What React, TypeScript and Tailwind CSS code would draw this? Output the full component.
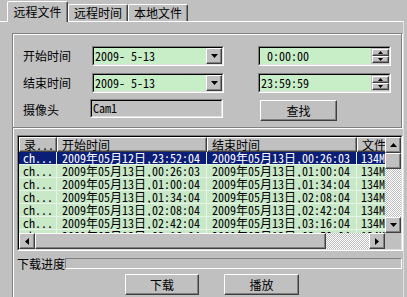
import React from "react";

const RAISED =
  "border border-t-white border-l-white border-r-[#404040] border-b-[#404040] shadow-[inset_-1px_-1px_0_#808080] bg-[#c0c0c0]";
const CHECKER =
  "bg-[image:repeating-conic-gradient(#ffffff_0%_25%,#c0c0c0_0%_50%)] bg-size-[2px_2px]";

function Tri({ dir, w = 7, h = 4 }: { dir: "up" | "down" | "left" | "right"; w?: number; h?: number }) {
  if (dir === "up")
    return (
      <svg width={w} height={h} viewBox={`0 0 ${w} ${h}`}>
        <polygon points={`0,${h} ${w},${h} ${w / 2},0`} fill="#000" />
      </svg>
    );
  if (dir === "down")
    return (
      <svg width={w} height={h} viewBox={`0 0 ${w} ${h}`}>
        <polygon points={`0,0 ${w},0 ${w / 2},${h}`} fill="#000" />
      </svg>
    );
  if (dir === "left")
    return (
      <svg width={h} height={w} viewBox={`0 0 ${h} ${w}`}>
        <polygon points={`${h},0 ${h},${w} 0,${w / 2}`} fill="#000" />
      </svg>
    );
  return (
    <svg width={h} height={w} viewBox={`0 0 ${h} ${w}`}>
      <polygon points={`0,0 0,${w} ${h},${w / 2}`} fill="#000" />
    </svg>
  );
}

function Combo({ value }: { value: string }) {
  return (
    <div className="w-[132px] h-[20px] border border-t-[#808080] border-l-[#808080] border-r-white border-b-white">
      <div className="h-full flex border border-t-[#000000] border-l-[#000000] border-r-[#dfdfdf] border-b-[#dfdfdf] bg-[#c8eec8]">
        <div className="flex-1 pl-[1px] flex items-center text-[12px] leading-none whitespace-pre">{value}</div>
        <div className={`w-[16px] h-full flex items-center justify-center ${RAISED}`}>
          <Tri dir="down" />
        </div>
      </div>
    </div>
  );
}

function TimeField({ value }: { value: string }) {
  return (
    <div className="w-[133px] h-[20px] border border-t-[#808080] border-l-[#808080] border-r-white border-b-white">
      <div className="h-full flex border border-t-[#000000] border-l-[#000000] border-r-[#dfdfdf] border-b-[#dfdfdf] bg-[#c0c0c0]">
        <div className="flex-1 pl-[1px] flex items-center text-[12px] leading-none whitespace-pre bg-[#c8eec8]">{value}</div>
        <div className="w-[18px] h-full flex flex-col justify-between py-[1px] pl-[1px]">
          <div className={`h-[7px] flex items-center justify-center ${RAISED}`}>
            <Tri dir="up" w={5} h={3} />
          </div>
          <div className={`h-[7px] flex items-center justify-center ${RAISED}`}>
            <Tri dir="down" w={5} h={3} />
          </div>
        </div>
      </div>
    </div>
  );
}

const rows: [string, string][] = [
  ["2009年05月12日,23:52:04", "2009年05月13日,00:26:03"],
  ["2009年05月13日,00:26:03", "2009年05月13日,01:00:04"],
  ["2009年05月13日,01:00:04", "2009年05月13日,01:34:04"],
  ["2009年05月13日,01:34:04", "2009年05月13日,02:08:04"],
  ["2009年05月13日,02:08:04", "2009年05月13日,02:42:04"],
  ["2009年05月13日,02:42:04", "2009年05月13日,03:16:04"],
  ["2009年05月13日,03:16:04", "2009年05月13日,03:50:04"],
];

function HeaderCell({ w, label }: { w: string; label: string }) {
  return (
    <div className={`${w} h-[15px] shrink-0 pl-[4px] flex items-center overflow-hidden whitespace-nowrap ${RAISED}`}>
      {label}
    </div>
  );
}

export default function App() {
  return (
    <div className="w-[407px] h-[297px] overflow-hidden bg-[#c0c0c0] text-black text-[12px] leading-none font-['Noto_Sans_Mono_CJK_SC','Noto_Sans_CJK_SC',sans-serif]">
      {/* Tabs */}
      <div className="flex items-end h-[21px] pl-[7px]">
        <div className="relative z-10 -mb-px h-[21px] w-[61px] flex items-center justify-center bg-[#c0c0c0] border-t border-l border-t-white border-l-white border-r border-r-[#404040] shadow-[inset_-1px_0_0_#808080] rounded-t-[2px]">
          远程文件
        </div>
        <div className="h-[17px] w-[60px] flex items-center justify-center border-t border-l border-t-white border-l-white border-r border-r-[#404040] shadow-[inset_-1px_0_0_#808080] rounded-t-[2px]">
          远程时间
        </div>
        <div className="h-[17px] w-[60px] flex items-center justify-center border-t border-l border-t-white border-l-white border-r border-r-[#404040] shadow-[inset_-1px_0_0_#808080] rounded-t-[2px]">
          本地文件
        </div>
      </div>

      {/* Panel */}
      <div className="border-t border-t-white w-[404px] h-[276px] border-r border-r-[#e0e0e0]">
        {/* Group box */}
        <div className="ml-[12px] mt-[11px] w-[390px] h-[95px] border border-[#808080] shadow-[inset_1px_1px_0_#ffffff,1px_1px_0_#ffffff] pt-[12px] pl-[10px]">
          <div className="flex h-[20px] items-center">
            <div className="w-[69px]">开始时间</div>
            <Combo value="2009- 5-13" />
            <div className="w-[34px]" />
            <TimeField value=" 0:00:00" />
          </div>
          <div className="flex h-[20px] items-center mt-[7px]">
            <div className="w-[69px]">结束时间</div>
            <Combo value="2009- 5-13" />
            <div className="w-[34px]" />
            <TimeField value="23:59:59" />
          </div>
          <div className="flex items-start mt-[6px]">
            <div className="w-[67px] h-[19px] flex items-center pt-[3px]">摄像头</div>
            <div className="w-[133px] h-[19px] border border-t-[#808080] border-l-[#808080] border-r-white border-b-white">
              <div className="h-full border border-t-[#000000] border-l-[#000000] border-r-[#dfdfdf] border-b-[#dfdfdf] pl-[1px] flex items-start pt-[1px] whitespace-pre">
                Cam1
              </div>
            </div>
            <div className="w-[37px]" />
            <div className={`mt-[1px] w-[77px] h-[21px] flex items-center justify-center ${RAISED}`}>查找</div>
          </div>
        </div>

        {/* Lower area */}
        <div className="ml-[12px] h-[169px] border-l border-l-[#808080] shadow-[inset_1px_0_0_#ffffff] pl-[4px] pt-[7px]">
          {/* List view */}
          <div className="w-[386px] h-[116px] border border-t-[#808080] border-l-[#808080] border-r-white border-b-white">
            <div className="h-full border border-t-[#000000] border-l-[#000000] border-r-[#dfdfdf] border-b-[#dfdfdf] flex flex-col">
              <div className="flex h-[96px]">
                <div className="w-[366px] overflow-hidden flex flex-col">
                  <div className="flex shrink-0">
                    <HeaderCell w="w-[38px]" label="录..." />
                    <HeaderCell w="w-[150px]" label="开始时间" />
                    <HeaderCell w="w-[150px]" label="结束时间" />
                    <HeaderCell w="w-[80px]" label="文件大小" />
                  </div>
                  {rows.map((r, i) => {
                    const sel = i === 0;
                    const rowCls = sel ? "bg-[#0a1e78] text-white" : "bg-[#c8e8c8] text-black";
                    return (
                      <div key={i} className={`flex shrink-0 h-[13px] ${rowCls}`}>
                        <div className="w-[38px] shrink-0 pl-[4px] flex items-center border-r border-b border-[#e6f4e6] overflow-hidden whitespace-nowrap">
                          ch...
                        </div>
                        <div className="w-[150px] shrink-0 pl-[5px] flex items-center border-r border-b border-[#e6f4e6] overflow-hidden whitespace-nowrap">
                          {r[0]}
                        </div>
                        <div className="w-[150px] shrink-0 pl-[5px] flex items-center border-r border-b border-[#e6f4e6] overflow-hidden whitespace-nowrap">
                          {r[1]}
                        </div>
                        <div className="w-[80px] shrink-0 pl-[4px] flex items-center border-b border-[#e6f4e6] overflow-hidden whitespace-nowrap">
                          134M
                        </div>
                      </div>
                    );
                  })}
                </div>
                {/* vertical scrollbar */}
                <div className="w-[16px] flex flex-col">
                  <div className={`h-[16px] flex items-center justify-center ${RAISED}`}>
                    <Tri dir="up" />
                  </div>
                  <div className={`h-[16px] ${RAISED}`} />
                  <div className={`flex-1 ${CHECKER}`} />
                  <div className={`h-[16px] flex items-center justify-center ${RAISED}`}>
                    <Tri dir="down" />
                  </div>
                </div>
              </div>
              {/* horizontal scrollbar */}
              <div className="flex h-[16px]">
                <div className={`w-[16px] flex items-center justify-center ${RAISED}`}>
                  <Tri dir="left" />
                </div>
                <div className={`w-[291px] ${RAISED}`} />
                <div className={`flex-1 ${CHECKER}`} />
                <div className={`w-[16px] flex items-center justify-center ${RAISED}`}>
                  <Tri dir="right" />
                </div>
                <div className="w-[16px] bg-[#c0c0c0]" />
              </div>
            </div>
          </div>

          {/* progress */}
          <div className="flex items-center h-[11px] mt-[7px]">
            <div className="w-[48px] whitespace-nowrap">下载进度</div>
            <div className="w-[337px] h-[11px] border border-t-[#808080] border-l-[#808080] border-r-white border-b-white" />
          </div>

          {/* buttons */}
          <div className="flex mt-[5px] pl-[108px]">
            <div className={`w-[74px] h-[21px] flex items-center justify-center ${RAISED}`}>下载</div>
            <div className="w-[25px]" />
            <div className={`w-[75px] h-[21px] flex items-center justify-center ${RAISED}`}>播放</div>
          </div>
        </div>
      </div>
    </div>
  );
}
